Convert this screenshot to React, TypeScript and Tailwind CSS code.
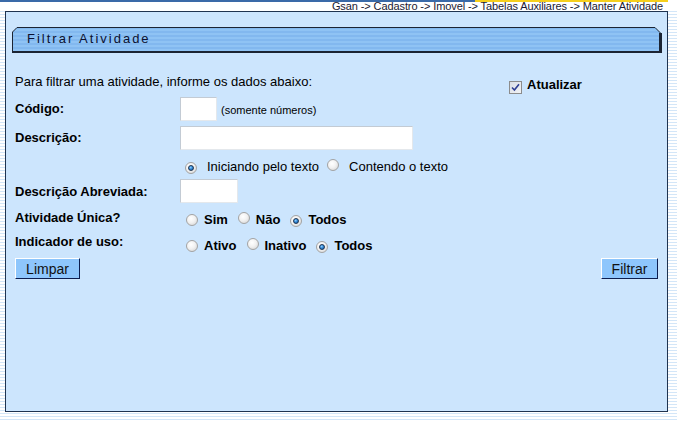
import React from "react";

function Radio({ checked }: { checked?: boolean }) {
  return (
    <span className="inline-flex h-[12px] w-[12px] shrink-0 items-center justify-center rounded-full border border-[#a3a3a3] bg-[radial-gradient(circle_at_40%_35%,#ffffff_0%,#f2f2f2_45%,#cfcfcf_100%)]">
      {checked && (
        <span className="h-[6px] w-[6px] rounded-full border border-[#1c3452] bg-[radial-gradient(circle_at_40%_35%,#8fd0ff_0%,#2f86d6_50%,#0f4f98_100%)]" />
      )}
    </span>
  );
}

function Checkbox() {
  return (
    <span className="inline-flex h-[13px] w-[13px] shrink-0 items-center justify-center border border-[#8c8c8c] bg-[linear-gradient(135deg,#d9dee6,#f1f3f6)]">
      <svg width="9" height="9" viewBox="0 0 9 9">
        <path d="M1 4.5 L3.4 7 L8 1.2" fill="none" stroke="#2e3f94" strokeWidth="1.6" />
      </svg>
    </span>
  );
}

function TabHeader({ title }: { title: string }) {
  return (
    <div className="relative ml-[6px] mt-[15px] h-[26px] w-[650px]">
      <svg className="absolute inset-0" width="650" height="26" viewBox="0 0 650 26">
        <defs>
          <pattern id="tabStripes" width="4" height="4" patternUnits="userSpaceOnUse">
            <rect width="4" height="4" fill="#8fc3f4" />
            <rect width="4" height="2" fill="#82b8ef" />
          </pattern>
        </defs>
        <path d="M0.5 25.5 V5 L5 0.5 H643 L648.5 6 V25.5 Z" fill="url(#tabStripes)" stroke="#1b2433" />
        <rect x="647" y="6" width="3" height="20" fill="#1b2433" />
        <rect x="0" y="24" width="650" height="2" fill="#1b2433" />
      </svg>
      <div className="absolute inset-0 flex items-center pb-[2px] pl-[15px] text-[13px] leading-[16px] tracking-[2px] text-[#0b1030]">
        {title}
      </div>
    </div>
  );
}

export default function App() {
  return (
    <div className="h-[421px] w-[677px] overflow-hidden bg-[repeating-linear-gradient(to_bottom,#ffffff_0px,#ffffff_2px,#d3e6f8_2px,#d3e6f8_3px)] font-['Liberation_Sans',Arial,sans-serif] text-black">
      {/* top bar + breadcrumb */}
      <div className="h-[11px] bg-white">
        <div className="flex h-[2px]">
          <div className="w-[475px] bg-[#3a6aa8]" />
          <div className="w-[193px] bg-[#f5cf1c]" />
        </div>
        <div className="pr-[14px] text-right text-[11px] leading-[8px] tracking-[-0.1px] text-[#1a1a33]">
          Gsan -&gt; Cadastro -&gt; Imovel -&gt; Tabelas Auxiliares -&gt; Manter Atividade
        </div>
      </div>

      <div className="ml-[5px] h-[401px] w-[663px] border border-[#1f3350] bg-[#cce5fd]">
        <TabHeader title="Filtrar Atividade" />

        <div className="px-[9px] pt-[21px] text-[13px]">
          {/* intro */}
          <div className="flex h-[19px] items-start">
            <div className="w-[494px] leading-[16px]">Para filtrar uma atividade, informe os dados abaixo:</div>
            <div className="mt-[4px]">
              <Checkbox />
            </div>
            <span className="ml-[5px] mt-[3px] font-bold leading-[16px]">Atualizar</span>
          </div>

          {/* Código */}
          <div className="mt-[4px] flex h-[24px] items-center">
            <div className="w-[165px] font-bold leading-[16px]">Código:</div>
            <div className="h-[24px] w-[37px] border border-[#c3cbd4] border-b-[#e4e8ec] border-r-[#e4e8ec] bg-white" />
            <span className="ml-[4px] mt-[2px] text-[11px] leading-[13px]">(somente números)</span>
          </div>

          {/* Descrição */}
          <div className="mt-[5px] flex h-[24px] items-center">
            <div className="w-[165px] font-bold leading-[16px]">Descrição:</div>
            <div className="h-[24px] w-[233px] border border-[#c3cbd4] border-b-[#e4e8ec] border-r-[#e4e8ec] bg-white" />
          </div>

          {/* tipo de pesquisa */}
          <div className="mt-[9px] flex h-[16px] items-center leading-[16px]">
            <div className="w-[165px]" />
            <span className="ml-[5px]">
              <Radio checked />
            </span>
            <span className="ml-[10px]">Iniciando pelo texto</span>
            <span className="ml-[8px]">
              <Radio />
            </span>
            <span className="ml-[10px]">Contendo o texto</span>
          </div>

          {/* Descrição Abreviada */}
          <div className="mt-[4px] flex h-[24px] items-center">
            <div className="mt-[1px] w-[165px] font-bold leading-[16px]">Descrição Abreviada:</div>
            <div className="h-[24px] w-[58px] border border-[#c3cbd4] border-b-[#e4e8ec] border-r-[#e4e8ec] bg-white" />
          </div>

          {/* Atividade Única */}
          <div className="mt-[7px] flex items-start font-bold leading-[16px]">
            <div className="w-[165px]">Atividade Única?</div>
            <div className="ml-[6px] mt-[2px] flex h-[16px] items-center">
              <Radio />
              <span className="ml-[6px]">Sim</span>
              <span className="ml-[10px]">
                <Radio />
              </span>
              <span className="ml-[6px]">Não</span>
              <span className="ml-[10px]">
                <Radio checked />
              </span>
              <span className="ml-[6px]">Todos</span>
            </div>
          </div>

          {/* Indicador de uso */}
          <div className="mt-[6px] flex items-start font-bold leading-[16px]">
            <div className="w-[165px]">Indicador de uso:</div>
            <div className="ml-[6px] mt-[4px] flex h-[16px] items-center">
              <Radio />
              <span className="ml-[6px]">Ativo</span>
              <span className="ml-[10px]">
                <Radio />
              </span>
              <span className="ml-[6px]">Inativo</span>
              <span className="ml-[10px]">
                <Radio checked />
              </span>
              <span className="ml-[6px]">Todos</span>
            </div>
          </div>

          {/* botões */}
          <div className="mt-[4px] flex justify-between">
            <button className="h-[21px] w-[65px] border border-b-[#0c1d4f] border-l-white border-r-[#0c1d4f] border-t-white bg-[#8ec6fc] text-[14px] leading-[16px] text-[#111111]">
              Limpar
            </button>
            <button className="h-[21px] w-[57px] border border-b-[#0c1d4f] border-l-white border-r-[#0c1d4f] border-t-white bg-[#8ec6fc] text-[14px] leading-[16px] text-[#111111]">
              Filtrar
            </button>
          </div>
        </div>
      </div>
    </div>
  );
}
